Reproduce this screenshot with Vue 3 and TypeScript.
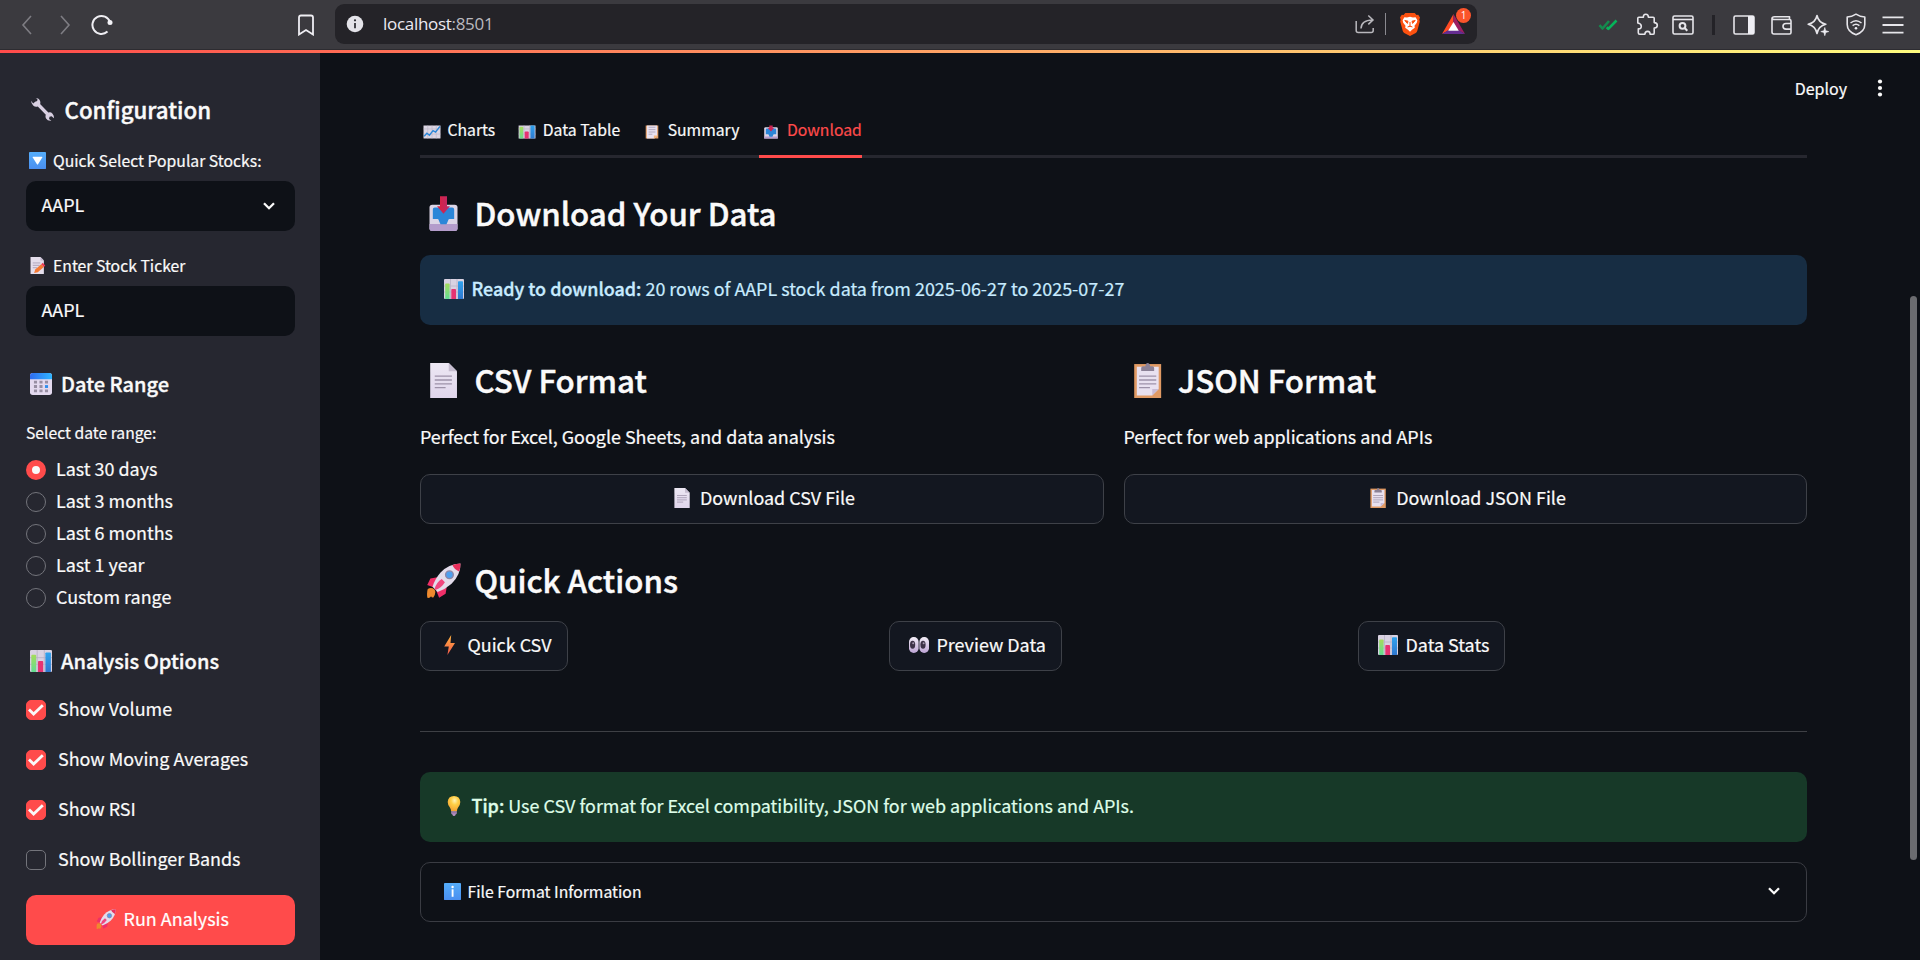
<script setup lang="ts">
import { ref } from 'vue'

interface Option { label: string; on: boolean }
interface Tab { icon: string; label: string; active?: boolean }
interface Action { icon: string; label: string }

const ticker = ref('AAPL')

const ranges: Option[] = [
  { label: 'Last 30 days', on: true },
  { label: 'Last 3 months', on: false },
  { label: 'Last 6 months', on: false },
  { label: 'Last 1 year', on: false },
  { label: 'Custom range', on: false },
]

const analyses: Option[] = [
  { label: 'Show Volume', on: true },
  { label: 'Show Moving Averages', on: true },
  { label: 'Show RSI', on: true },
  { label: 'Show Bollinger Bands', on: false },
]

const tabs: Tab[] = [
  { icon: 'line', label: 'Charts' },
  { icon: 'bars', label: 'Data Table' },
  { icon: 'memo', label: 'Summary' },
  { icon: 'inbox', label: 'Download', active: true },
]

const formats = [
  { icon: 'page', title: 'CSV Format', text: 'Perfect for Excel, Google Sheets, and data analysis', button: 'Download CSV File' },
  { icon: 'clip', title: 'JSON Format', text: 'Perfect for web applications and APIs', button: 'Download JSON File' },
]

const actions: Action[] = [
  { icon: 'bolt', label: 'Quick CSV' },
  { icon: 'eyes', label: 'Preview Data' },
  { icon: 'bars', label: 'Data Stats' },
]
</script>

<template>
  <div class="window">
    <!-- Shared pictograms, each on a 20-unit square -->
    <svg class="defs" width="0" height="0" aria-hidden="true">
      <defs>
        <linearGradient id="g-page" x1="0" y1="0" x2="0" y2="1"><stop offset="0" stop-color="#ece7f3" /><stop offset="1" stop-color="#e0d6ec" /></linearGradient>
        <linearGradient id="g-green" x1="0" y1="0" x2="0" y2="1"><stop offset="0" stop-color="#a5dc5b" /><stop offset="1" stop-color="#62dc92" /></linearGradient>
        <linearGradient id="g-blue" x1="0" y1="0" x2="0" y2="1"><stop offset="0" stop-color="#2fa3ee" /><stop offset="1" stop-color="#2f77cf" /></linearGradient>
        <linearGradient id="g-tile" x1="0" y1="0" x2="0" y2="1"><stop offset="0" stop-color="#55adfa" /><stop offset="1" stop-color="#4a8ff0" /></linearGradient>
        <linearGradient id="g-bolt" x1="0" y1="0" x2="0" y2="1"><stop offset="0" stop-color="#ffb43f" /><stop offset="1" stop-color="#f2564a" /></linearGradient>
        <linearGradient id="g-cal" x1="0" y1="0" x2="1" y2="0"><stop offset="0" stop-color="#2f6bee" /><stop offset="1" stop-color="#2fb5ff" /></linearGradient>
        <linearGradient id="g-arrow" x1="0" y1="0" x2="1" y2="0"><stop offset="0" stop-color="#de1f3d" /><stop offset="1" stop-color="#b92a6a" /></linearGradient>
        <linearGradient id="g-eye" x1="0" y1="0" x2="0" y2="1"><stop offset="0" stop-color="#f4eff8" /><stop offset="1" stop-color="#bda4d4" /></linearGradient>
        <radialGradient id="g-bulb" cx=".55" cy=".3" r=".7"><stop offset="0" stop-color="#fff3b8" /><stop offset=".4" stop-color="#ffd046" /><stop offset="1" stop-color="#f4a032" /></radialGradient>

        <symbol id="e-bars" viewBox="0 0 20 20">
          <rect width="20" height="20" rx="1" fill="#d9d2e2" />
          <path d="M0 7h20M0 13h20M6.5 0v20M13 0v20" stroke="#b9b2c6" stroke-width=".8" />
          <path d="M1.2 20V5.200q0-.8.8-.8h2.800q.8 0 .8.8V20z" fill="url(#g-green)" />
          <path d="M7.300 20v-9.200q0-.8.8-.8h3.100q.8 0 .8.8V20z" fill="#e63372" />
          <path d="M14 20V3q0-.8.8-.8h3.400q.8 0 .8.8v17z" fill="url(#g-blue)" />
        </symbol>
        <symbol id="e-line" viewBox="0 0 20 20">
          <rect y="1" width="20" height="18" rx="1" fill="#dcd6e4" />
          <path d="M0 7h20M0 13h20M5 1v18M10 1v18M15 1v18" stroke="#bab5c6" stroke-width=".7" />
          <path d="M.8 15.500 4 12l3 2.400L11.200 9l3 1.600L19.400 4" fill="none" stroke="#2b87d8" stroke-width="1.600" />
        </symbol>
        <symbol id="e-memo" viewBox="0 0 20 20">
          <path d="M2.600 0h14.800v20H2.600z" fill="#e3a06b" />
          <path d="M4 1h12v13.800L12.200 19H4z" fill="#e9e2f0" />
          <path d="M12.200 19v-4.200h4.800z" fill="#f4b57c" />
          <path d="M6 5h8M6 7.800h8M6 10.600h8M6 13.200h4.400" stroke="#aaa0b8" stroke-width="1" />
        </symbol>
        <symbol id="e-inbox" viewBox="0 0 20 20">
          <rect x="2" y="5" width="16" height="15" rx="1.600" fill="#dcd5e6" />
          <path d="M2 16h16v2.400q0 1.600-1.600 1.600H3.600Q2 20 2 18.400z" fill="#b49ccb" />
          <path d="M5 6.600h10q1.100 0 1.100 1.100V13.200h-2.700q-.500 0-.700.600L12 15.500q-.200.700-1 .700H9q-.800 0-1-.700l-.700-1.700q-.200-.600-.700-.600H3.900V7.700q0-1.100 1.100-1.100z" fill="#2b86d8" />
          <path d="M8 .2h4V5.800h1.700L10 10.100 6.300 5.800H8z" fill="url(#g-arrow)" />
        </symbol>
        <symbol id="e-page" viewBox="0 0 20 20">
          <path d="M2.400 0h10.600l4.700 4.700V20H2.400z" fill="url(#g-page)" />
          <path d="M13 0v4.700h4.700z" fill="#c6bdd0" />
          <path d="M5 7.500h9.800M5 9.700h9.800M5 11.900h9.800M5 14.100h6.200" stroke="#9d92a9" stroke-width=".75" />
        </symbol>
        <symbol id="e-clip" viewBox="0 0 20 20">
          <path d="M2.400.6h15.400V20H2.400z" fill="#e09a64" />
          <path d="M3.900 2.100h12.500v12.800l-3.700 3.700H3.900z" fill="#e8e1f0" />
          <path d="M12.700 18.600v-3.700h3.700z" fill="#c9bcd6" />
          <path d="M6.400 4.600V2.900q0-1 1-1h1.400Q9 0 10.100 0t1.400 1.900h1.300q1 0 1 1v1.700z" fill="#8b8196" />
          <path d="M5.200 7.500h9.800M5.200 9.700h9.800M5.200 11.900h9.800M5.200 14.100h6.200" stroke="#9d92a9" stroke-width=".75" />
        </symbol>
        <symbol id="e-rocket" viewBox="0 0 20 20">
          <path d="M1 14.900q2-1.400 3.800.2 1.300 1.800-.600 4.600-1 .2-1.300-.7-.500 1.100-2.100.9-.500-2.800.2-5z" fill="#ee8a2e" />
          <path d="M7.300 8 2.500 8.800.700 12.500l3.500 1.300zM12 12.700l-.800 4.800-3.700 2.300-1.500-3.600z" fill="#ef2f68" />
          <path d="M19.700.3Q12.900.4 8.200 5.600 5 9.300 3.700 13.600l2.900 2.900q4.600-1.600 8-4.700Q19.800 7 19.700.3z" fill="#e3dceb" />
          <path d="M19.700.3q-2.500 0-4.600.9 1.100 2.600 3.800 3.700.900-2.200.8-4.600z" fill="#e92f5c" />
          <path d="M9 9.200Q6 11 4.900 14.900l.5.500Q8.900 14.200 10.800 11z" fill="#f0467e" />
          <circle cx="13.400" cy="6.700" r="2.200" fill="#4f9fee" stroke="#8d86a8" stroke-width=".8" />
        </symbol>
        <symbol id="e-wrench" viewBox="0 0 20 20">
          <path d="M1 .9 3.600 3.300 5.400 2.700 5.600.9 4 0Q7 .1 7.900 2.600q.500 1.500 0 2.700l7.200 7.400q2.100-.700 3.600.9 1.500 1.600 1.200 3.900l-2-1.600-1.800.500-.400 1.800 2 1.500q-3.200.4-4.600-1.900-.900-1.600-.2-3.200L5.900 7.300Q3.700 8 1.900 6.500.3 5 0 2.400L1.900 4.800 3.600 3.300z" fill="#d9d0e2" />
        </symbol>
        <symbol id="e-down" viewBox="0 0 20 20">
          <rect width="20" height="20" rx="1" fill="url(#g-tile)" />
          <path d="M4.800 5.600h10.400q.900 0 .4.900l-5 8q-.600.8-1.200 0l-5-8q-.500-.9.400-.9z" fill="#fff" />
        </symbol>
        <symbol id="e-info" viewBox="0 0 20 20">
          <rect width="20" height="20" rx="1" fill="url(#g-tile)" />
          <rect x="9" y="7.400" width="2.200" height="8.800" fill="#fff" />
          <circle cx="10.100" cy="4.700" r="1.400" fill="#fff" />
        </symbol>
        <symbol id="e-edit" viewBox="0 0 20 20">
          <path d="M1.800 0h11.700l4 4v16H1.800z" fill="#e5deec" />
          <path d="M13.500 0v4h4z" fill="#c2b8ce" />
          <path d="M4.400 7h9M4.400 9.800h8M4.400 12.600h5" stroke="#a79cb3" stroke-width="1" />
          <path d="m6 18.800 1.300-4.200 7-6.200 3.200 3.300-7.200 6.300z" fill="#f57a35" />
          <path d="m14.300 8.400 1.900-1.600 2.900 3.100-1.600 1.800z" fill="#ec3b55" />
        </symbol>
        <symbol id="e-cal" viewBox="0 0 20 20">
          <rect width="20" height="20" rx="2.500" fill="#e4daef" />
          <path d="M0 5.600V2.500Q0 0 2.500 0h15Q20 0 20 2.500v3.100z" fill="url(#g-cal)" />
          <path d="M3.600 8.300h2.800M8.600 8.300h2.800M13.600 8.300h2.800M3.600 12.300h2.800M8.600 12.300h2.800M3.600 16.300h2.800M8.600 16.300h2.800M13.600 16.300h2.800" stroke="#988fa3" stroke-width="2.600" />
          <path d="M13.600 12.300h2.800" stroke="#2f8eec" stroke-width="2.600" />
        </symbol>
        <symbol id="e-bolt" viewBox="0 0 20 20">
          <path d="M11.200 0 4.200 11.600h4.600L7.400 20 15 8.100h-4.500z" fill="url(#g-bolt)" />
        </symbol>
        <symbol id="e-eyes" viewBox="0 0 20 20">
          <rect x="0" y="2" width="9.600" height="16" rx="4.700" fill="url(#g-eye)" />
          <rect x="10.400" y="2" width="9.600" height="16" rx="4.700" fill="url(#g-eye)" />
          <ellipse cx="3.600" cy="9.800" rx="2.600" ry="4" fill="#3d3247" />
          <ellipse cx="14" cy="9.800" rx="2.600" ry="4" fill="#3d3247" />
          <circle cx="4.200" cy="8.200" r="1" fill="#a79ab2" />
          <circle cx="14.600" cy="8.200" r="1" fill="#a79ab2" />
        </symbol>
        <symbol id="e-bulb" viewBox="0 0 20 20">
          <path d="M10 0q6 0 6.300 6 0 3-2.200 5.600-1.100 1.500-1.200 3.600H7.100q-.1-2.100-1.200-3.600Q3.700 9 3.700 6 4 0 10 0z" fill="url(#g-bulb)" />
          <path d="M7.200 15.200h5.600v1.900q0 1.100-1.200 1.300Q11.400 20 10 20t-1.600-1.600q-1.200-.2-1.200-1.300z" fill="#b58fc0" />
          <path d="M7.200 16.800h5.600" stroke="#7f6694" stroke-width=".8" />
        </symbol>
      </defs>
    </svg>

    <header class="chrome">
      <div class="nav">
        <svg class="back" width="12" height="20" viewBox="0 0 12 20"><path d="M10 1 2 10l8 9" /></svg>
        <svg class="forward" width="12" height="20" viewBox="0 0 12 20"><path d="m2 1 8 9-8 9" /></svg>
        <svg class="reload" width="24" height="22" viewBox="0 0 24 22"><path d="M17.500 17.600A9 9 0 1 1 20 8.200" /><circle cx="20" cy="8.500" r="2.500" /></svg>
        <svg class="bookmark" width="18" height="22" viewBox="0 0 18 22"><path d="M2 3.500Q2 1.500 4 1.500h10q2 0 2 2v17l-7-4.500-7 4.500z" /></svg>
      </div>
      <div class="address">
        <svg width="18" height="18" viewBox="0 0 18 18"><circle cx="9" cy="9" r="8.300" fill="#e4e3e9" /><path d="M9 8v5.200" stroke="#28272d" stroke-width="1.700" /><circle cx="9" cy="5.300" r="1.100" fill="#28272d" /></svg>
        <span class="url"><b>localhost</b>:8501</span>
        <svg class="share" width="20" height="20" viewBox="0 0 20 20"><path d="M1.200 7v9.500q0 2 2 2h13q2 0 2-2V14M6 14.500q.2-8.300 11.500-8.600M13.300 1.500l4.700 4.400-4.700 4.500" /></svg>
        <i class="bar" />
        <svg class="brave" width="20" height="23" viewBox="0 0 20 23">
          <path d="M5.300 0h9.400l1.800 2 1.700-.2L20 4.600l-.7 2 .5 2-2.500 9.200q-.4 1.300-1.500 2.100L10 23l-5.800-3.100q-1.100-.8-1.500-2.100L.2 8.600l.5-2-.7-2 1.800-2.800L3.500 2z" fill="#fb5110" />
          <path d="M4.400 4.200 7 4.500l3-.7 3 .7 2.600-.3 1.800 3-.6 2.600-2.300 3 .3 2-2.800 1.900-2 2-2-2-2.800-1.900.3-2-2.300-3-.6-2.600z" fill="#fff" />
          <path d="M4.800 7.500 8 8.200l-.6 2.200zM15.200 7.500l-3.200.7.6 2.200zM10 9v4.500M7.600 14l2.400-.9 2.400.9" fill="#fb5110" stroke="#fb5110" stroke-width="1" />
        </svg>
        <div class="bat">
          <svg width="23" height="20" viewBox="0 0 23 20"><path d="M11.500 0 0 20l11.500-6.500z" fill="#ff4b24" /><path d="M11.500 0 23 20l-11.500-6.500z" fill="#9e1f63" /><path d="M0 20h23l-6-3.800H6z" fill="#652d91" /><path d="M11.500 8 6.200 16.800h10.600z" fill="#fff" /></svg>
          <span class="badge">1</span>
        </div>
      </div>
      <div class="tools">
        <svg class="checks" width="20" height="12" viewBox="0 0 20 12"><path d="m1.500 6.200 3 3.300L11 2" stroke="#148a4d" /><path d="m8.700 8.300 1.600 1.500L18.500 1.500" stroke="#06b45a" /></svg>
        <svg width="24" height="24" viewBox="0 0 24 24"><path d="M3.800 4.300h4.600q-.2-3 2.400-3t2.600 3h4.800q1 0 1 1v4.300q3.100 0 3.100 2.700t-3.100 2.800v4.800q0 1.400-1.400 1.400h-2.700q.1-2.900-2.500-2.900t-2.700 2.900H4.800q-1.500 0-1.500-1.500v-3.900q3 .1 3-2.600T2.800 10V5.300q0-1 1-1z" /></svg>
        <svg width="22" height="20" viewBox="0 0 22 20"><rect x="1" y="1" width="20" height="18" rx="1.500" /><path d="M1 4.500h20" /><circle cx="10.500" cy="10.800" r="2.900" stroke-width="2" /><path d="m12.700 13 2.600 2.800" stroke-width="2" /></svg>
        <i class="split" />
        <svg width="22" height="20" viewBox="0 0 22 20"><rect x="1" y="1" width="20" height="18" rx="1.500" /><path d="M15 1h6v18h-6z" fill="#efeef4" stroke="none" /></svg>
        <svg width="22" height="20" viewBox="0 0 22 20"><path d="M18.500 5V1.800H3.500Q1 1.800 1 3.500V17q0 2 2 2h15.500q1.500 0 1.500-1.500V6q0-1.500-1.500-1.500H3.500Q1 4.500 1 3M20.500 8.500H15q-3 0-3 2.800t3 2.800h5.500" /></svg>
        <svg class="spark" width="22" height="22" viewBox="0 0 22 22"><path d="M10 1.500q1.400 7 8.800 8.800Q11.500 12 10 19.500q-1.500-7.500-8.800-9.200Q8.600 8.500 10 1.500z" /><path d="m17.800 13.500.9 3.200 3.100.9-3.100.9-.9 3.200-.9-3.200-3.100-.9 3.100-.9z" fill="#efeef4" stroke="#efeef4" stroke-width=".6" /></svg>
        <svg width="20" height="23" viewBox="0 0 20 23"><path d="M10 1.200q3.800 2.600 8.800 2.800v7.500q0 7-8.800 10.300Q1.200 18.500 1.200 11.500V4Q6.200 3.800 10 1.200z" /><path d="M4.500 10Q10 5.400 15.500 10M6.600 12.600q3.400-2.700 6.800 0" stroke-width="1.500" /><circle cx="10" cy="15.200" r="1.300" fill="#efeef4" stroke="none" /></svg>
        <svg width="22" height="18" viewBox="0 0 22 18"><path d="M.5 1.300h21M.5 9h21M.5 16.700h21" stroke-width="1.800" /></svg>
      </div>
    </header>
    <div class="rainbow" />

    <div class="page">
      <aside class="sidebar">
        <h2 class="row config"><svg><use href="#e-wrench" /></svg>Configuration</h2>

        <label class="row caption"><svg><use href="#e-down" /></svg>Quick Select Popular Stocks:</label>
        <div class="field">
          <span>{{ ticker }}</span>
          <svg width="14" height="10" viewBox="0 0 14 10"><path d="m2 2.200 5 5 5-5" /></svg>
        </div>

        <label class="row caption second"><svg><use href="#e-edit" /></svg>Enter Stock Ticker</label>
        <div class="field"><span>{{ ticker }}</span></div>

        <h3 class="row dates"><svg><use href="#e-cal" /></svg>Date Range</h3>
        <div class="hint">Select date range:</div>
        <div class="radios">
          <div v-for="r in ranges" :key="r.label" class="radio" :class="{ on: r.on }">
            <i /><span>{{ r.label }}</span>
          </div>
        </div>

        <h3 class="row options"><svg><use href="#e-bars" /></svg>Analysis Options</h3>
        <div class="boxes">
          <div v-for="a in analyses" :key="a.label" class="check" :class="{ on: a.on }">
            <i><svg v-if="a.on" width="18" height="14" viewBox="0 0 18 14"><path d="m2 6.500 4.600 4.600L15.800 2.200" /></svg></i>
            <span>{{ a.label }}</span>
          </div>
        </div>
        <button class="run"><span class="row body"><svg><use href="#e-rocket" /></svg>Run Analysis</span></button>
      </aside>

      <main class="main">
        <div class="topbar">
          <span>Deploy</span>
          <svg width="6" height="18" viewBox="0 0 6 18"><circle cx="3" cy="2.500" r="2.100" /><circle cx="3" cy="9" r="2.100" /><circle cx="3" cy="15.500" r="2.100" /></svg>
        </div>

        <nav class="tabs">
          <div v-for="t in tabs" :key="t.label" class="tab" :class="{ active: t.active }">
            <span class="row caption"><svg><use :href="'#e-' + t.icon" /></svg>{{ t.label }}</span>
          </div>
        </nav>

        <h1 class="row title"><svg><use href="#e-inbox" /></svg>Download Your Data</h1>

        <div class="alert info">
          <span class="row body"><svg><use href="#e-bars" /></svg><span><strong>Ready to download:</strong> 20 rows of AAPL stock data from 2025-06-27 to 2025-07-27</span></span>
        </div>

        <div class="formats">
          <section v-for="f in formats" :key="f.title">
            <h1 class="row title"><svg><use :href="'#e-' + f.icon" /></svg>{{ f.title }}</h1>
            <p>{{ f.text }}</p>
            <button class="btn wide"><span class="row body"><svg><use :href="'#e-' + f.icon" /></svg>{{ f.button }}</span></button>
          </section>
        </div>

        <h1 class="row title quick"><svg><use href="#e-rocket" /></svg>Quick Actions</h1>
        <div class="actions">
          <div v-for="a in actions" :key="a.label">
            <button class="btn"><span class="row body"><svg><use :href="'#e-' + a.icon" /></svg>{{ a.label }}</span></button>
          </div>
        </div>

        <hr>

        <div class="alert tip">
          <span class="row body"><svg><use href="#e-bulb" /></svg><span><strong>Tip:</strong> Use CSV format for Excel compatibility, JSON for web applications and APIs.</span></span>
        </div>

        <div class="expander">
          <span class="row caption"><svg><use href="#e-info" /></svg>File Format Information</span>
          <svg class="chev" width="14" height="10" viewBox="0 0 14 10"><path d="m2 2.200 5 5 5-5" /></svg>
        </div>
      </main>
      <div class="scroll" />
    </div>
  </div>
</template>

<style>
html, body { background: #0e1117; overflow: hidden; }
</style>

<style scoped>
.window {
  width: 1920px;
  height: 960px;
  overflow: hidden;
  display: flex;
  flex-direction: column;
  background: #0e1117;
  color: #fafafa;
  font-family: "Noto Sans CJK SC", "Open Sans", sans-serif;
  font-size: 17.93px;
  -webkit-text-stroke: 0.2px currentColor;
}
.defs { position: absolute; }
h1, h2, h3, p, hr { margin: 0; }
button { font: inherit; color: inherit; padding: 0; }

/* Browser toolbar */
.chrome {
  height: 50px;
  flex: none;
  box-sizing: border-box;
  border-bottom: 1px solid #2d2c31;
  background: #3b3a3f;
  display: flex;
  align-items: flex-start;
  -webkit-text-stroke: 0;
}
.nav { width: 335px; height: 49px; display: flex; align-items: center; box-sizing: border-box; padding-left: 21px; }
.nav path { fill: none; stroke: #efeef3; stroke-width: 1.8; }
.nav .back path, .nav .forward path { stroke: #7e7d83; stroke-width: 1.6; }
.forward { margin-left: 26px; }
.reload { margin-left: 19px; }
.nav .reload path { stroke-width: 2; }
.reload circle { fill: #f2f1f6; }
.bookmark { margin-left: 183px; }
.address {
  width: 1142px;
  height: 40px;
  margin-top: 4px;
  box-sizing: border-box;
  padding: 0 12px 0 11px;
  border-radius: 9px;
  background: #242328;
  display: flex;
  align-items: center;
}
.url { margin-left: 19px; flex: 1; font: 400 17px/24px "Open Sans", sans-serif; letter-spacing: -0.3px; color: #bab9bf; padding-bottom: 1px; }
.url b { font-weight: 400; color: #eceaf2; }
.share { fill: none; stroke: #b9b8bd; stroke-width: 1.5; }
.bar { width: 1px; height: 22px; margin: 0 14px 0 10px; background: #8b8a90; }
.brave { margin-right: 22px; }
.bat { position: relative; width: 23px; height: 20px; }
.bat svg { display: block; }
.badge {
  position: absolute;
  left: 14px;
  top: -6px;
  width: 15px;
  height: 15px;
  border-radius: 50%;
  background: #fb542b;
  color: #fff;
  font: 10px/15px "Open Sans", sans-serif;
  text-align: center;
}
.tools { height: 49px; margin-left: 121px; display: flex; align-items: center; }
.tools svg { fill: none; stroke: #e6e5ea; stroke-width: 1.6; stroke-linejoin: round; margin-right: 16px; }
.tools .checks { stroke-width: 2.6; margin-right: 17px; }
.tools .checks + svg { margin-right: 13px; }
.tools .split { width: 3px; height: 20px; margin: 0 18px 0 2px; background: #232227; }
.tools .spark { margin-left: -2px; margin-right: 17px; }
.rainbow { height: 3px; flex: none; background: linear-gradient(90deg, #ff4b4b, #fffd80); }

/* Icon + text rows */
.row { display: flex; align-items: center; white-space: nowrap; }
.row > svg { flex: none; display: block; }
.title { height: 44px; box-sizing: border-box; padding-top: 2px; font-size: 31.25px; font-weight: 500; line-height: 42px; -webkit-text-stroke: 0.45px currentColor; }
.title > svg { width: 35px; height: 35px; margin: 0 13.5px 0 6px; }
.config { height: 40px; font-size: 22.3px; font-weight: 500; -webkit-text-stroke: 0.4px currentColor; }
.config > svg { width: 23px; height: 23px; margin: 0 10.5px 0 5px; }
.dates, .options { height: 30px; font-size: 20px; font-weight: 500; -webkit-text-stroke: 0.35px currentColor; }
.dates > svg, .options > svg { width: 22px; height: 22px; margin: 2px 9px 0 4px; }
.caption { height: 23px; font-size: 15.75px; line-height: 23px; }
.caption > svg { width: 17px; height: 17px; margin: 0 7px 0 3px; }
.body { height: 30px; line-height: 30px; padding-bottom: 5px; }
.body > svg { width: 20px; height: 20px; margin: 3px 8px 0 3.5px; }

.page { flex: 1; display: flex; min-height: 0; }

/* Sidebar */
.sidebar { width: 320px; box-sizing: border-box; padding: 36px 25px 0 26px; background: #262730; }
.sidebar > .caption { margin: 20px 0 9px; }
.sidebar > .second { margin-top: 23px; }
.field {
  height: 50px;
  box-sizing: border-box;
  padding: 0 19px 0 15.5px;
  border-radius: 10px;
  background: #0e1117;
  display: flex;
  align-items: center;
  justify-content: space-between;
}
.field span { line-height: 30px; padding-bottom: 5px; }
.field path, .chev path { fill: none; stroke: #fafafa; stroke-width: 2.3; }
.dates { margin-top: 32px; }
.hint { height: 23px; margin-top: 23px; font-size: 15.7px; line-height: 23px; }
.radios { margin-top: 10px; }
.radio { height: 32px; display: flex; align-items: center; }
.radio i { width: 20px; height: 20px; box-sizing: border-box; border-radius: 50%; border: 1.5px solid #73747b; }
.radio.on i { border: 6.5px solid #ff4b4b; background: #fafafa; }
.radio span { margin-left: 10px; line-height: 28px; padding-bottom: 4px; }
.options { margin-top: 31px; }
.boxes { margin-top: 10px; }
.check { height: 50px; display: flex; align-items: center; }
.check i { width: 20px; height: 20px; box-sizing: border-box; border-radius: 5px; border: 1px solid #73747b; display: flex; align-items: center; justify-content: center; }
.check.on i { background: #ff4b4b; border-color: #ff4b4b; }
.check path { fill: none; stroke: #fafafa; stroke-width: 2.8; }
.check span { margin-left: 12px; line-height: 28px; padding-bottom: 5px; }
.run { width: 269px; height: 50px; margin-top: 10px; border: 0; border-radius: 10px; background: #ff4b4b; color: #fff; display: flex; align-items: center; justify-content: center; }

/* Content */
.main { width: 1387px; margin-left: 100px; }
.topbar { height: 65px; box-sizing: border-box; padding-top: 4px; margin-right: -76px; display: flex; align-items: center; justify-content: flex-end; font-size: 16px; line-height: 24px; }
.topbar svg { margin-left: 30px; fill: #fafafa; }
.tabs { height: 40px; box-sizing: border-box; display: flex; gap: 20px; border-bottom: 3px solid #26272f; }
.tab { height: 40px; box-sizing: border-box; }
.tab > .caption > svg { width: 18px; margin: 4px 6.5px 0 3px; clip-path: inset(2.5px 0 1.5px); }
.tab.active { border-bottom: 3px solid #ff4b4b; color: #ff4b4b; }
.tabs + .title { margin-top: 32px; }
.alert { height: 70px; box-sizing: border-box; padding: 0 20px; border-radius: 10px; display: flex; align-items: center; }
.alert strong { font-weight: 500; -webkit-text-stroke: 0.35px currentColor; }
.info { margin-top: 21px; background: #172d43; color: #c7ebff; }
.formats { display: grid; grid-template-columns: 1fr 1fr; gap: 20px; margin-top: 32px; }
.formats p { margin: 20px 0 23px; height: 30px; line-height: 30px; }
.btn { height: 50px; box-sizing: border-box; padding: 0 15px; border: 1px solid #3e4148; border-radius: 10px; background: #131720; display: flex; align-items: center; justify-content: center; }
.wide { width: 100%; }
.quick { margin-top: 33px; }
.actions { display: grid; grid-template-columns: repeat(3, 1fr); gap: 20px; margin-top: 20px; }
hr { height: 1px; border: 0; margin: 60px 0 40px; background: #3e4045; }
.tip { background: #173928; color: #dffde9; }
.expander { height: 60px; box-sizing: border-box; margin-top: 20px; padding: 0 25px 2px 19.5px; border: 1px solid #3a3c43; border-radius: 10px; display: flex; align-items: center; justify-content: space-between; }
.scroll { width: 7px; height: 564px; margin: 243px 0 0 103px; border-radius: 4px; background: #6b6c70; }
</style>
